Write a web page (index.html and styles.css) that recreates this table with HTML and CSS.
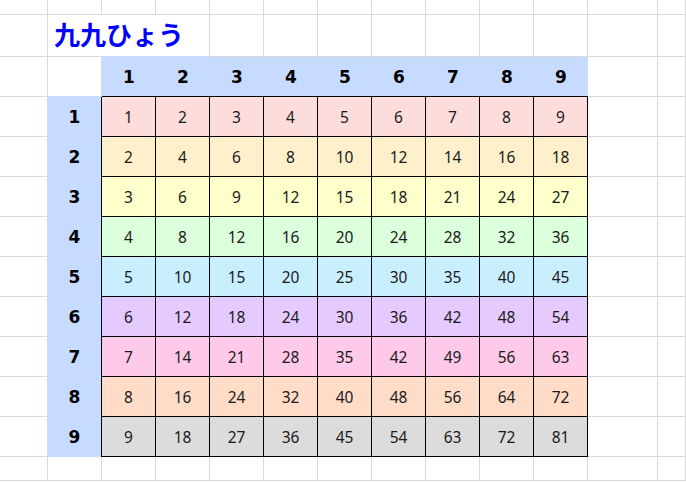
FILE: index.html
```html
<!DOCTYPE html>
<html lang="ja">
<head>
<meta charset="utf-8">
<title>九九ひょう</title>
<link rel="stylesheet" href="styles.css">
</head>
<body>
<div class="sheet">
  <!-- row 1 -->
  <div class="g"></div><div class="g"></div><div class="g"></div><div class="g"></div><div class="g"></div><div class="g"></div><div class="g"></div><div class="g"></div><div class="g"></div><div class="g"></div><div class="g"></div><div class="g"></div><div class="g"></div>
  <!-- row 2: title -->
  <div class="g"></div><div class="g ttl">九九ひょう</div><div class="g"></div><div class="g"></div><div class="g"></div><div class="g"></div><div class="g"></div><div class="g"></div><div class="g"></div><div class="g"></div><div class="g"></div>
  <!-- row 3: column header -->
  <div class="g"></div><div class="g hb"></div>
  <div class="hn">1</div><div class="hn">2</div><div class="hn">3</div><div class="hn">4</div><div class="hn">5</div><div class="hn">6</div><div class="hn">7</div><div class="hn">8</div><div class="hn">9</div>
  <div class="g"></div><div class="g"></div>
  <!-- row 4 -->
  <div class="g ab"></div><div class="rh">1</div>
  <div class="d r1">1</div><div class="d r1">2</div><div class="d r1">3</div><div class="d r1">4</div><div class="d r1">5</div><div class="d r1">6</div><div class="d r1">7</div><div class="d r1">8</div><div class="d r1">9</div>
  <div class="g"></div><div class="g"></div>
  <!-- row 5 -->
  <div class="g ab"></div><div class="rh">2</div>
  <div class="d r2">2</div><div class="d r2">4</div><div class="d r2">6</div><div class="d r2">8</div><div class="d r2">10</div><div class="d r2">12</div><div class="d r2">14</div><div class="d r2">16</div><div class="d r2">18</div>
  <div class="g"></div><div class="g"></div>
  <!-- row 6 -->
  <div class="g ab"></div><div class="rh">3</div>
  <div class="d r3">3</div><div class="d r3">6</div><div class="d r3">9</div><div class="d r3">12</div><div class="d r3">15</div><div class="d r3">18</div><div class="d r3">21</div><div class="d r3">24</div><div class="d r3">27</div>
  <div class="g"></div><div class="g"></div>
  <!-- row 7 -->
  <div class="g ab"></div><div class="rh">4</div>
  <div class="d r4">4</div><div class="d r4">8</div><div class="d r4">12</div><div class="d r4">16</div><div class="d r4">20</div><div class="d r4">24</div><div class="d r4">28</div><div class="d r4">32</div><div class="d r4">36</div>
  <div class="g"></div><div class="g"></div>
  <!-- row 8 -->
  <div class="g ab"></div><div class="rh">5</div>
  <div class="d r5">5</div><div class="d r5">10</div><div class="d r5">15</div><div class="d r5">20</div><div class="d r5">25</div><div class="d r5">30</div><div class="d r5">35</div><div class="d r5">40</div><div class="d r5">45</div>
  <div class="g"></div><div class="g"></div>
  <!-- row 9 -->
  <div class="g ab"></div><div class="rh">6</div>
  <div class="d r6">6</div><div class="d r6">12</div><div class="d r6">18</div><div class="d r6">24</div><div class="d r6">30</div><div class="d r6">36</div><div class="d r6">42</div><div class="d r6">48</div><div class="d r6">54</div>
  <div class="g"></div><div class="g"></div>
  <!-- row 10 -->
  <div class="g ab"></div><div class="rh">7</div>
  <div class="d r7">7</div><div class="d r7">14</div><div class="d r7">21</div><div class="d r7">28</div><div class="d r7">35</div><div class="d r7">42</div><div class="d r7">49</div><div class="d r7">56</div><div class="d r7">63</div>
  <div class="g"></div><div class="g"></div>
  <!-- row 11 -->
  <div class="g ab"></div><div class="rh">8</div>
  <div class="d r8">8</div><div class="d r8">16</div><div class="d r8">24</div><div class="d r8">32</div><div class="d r8">40</div><div class="d r8">48</div><div class="d r8">56</div><div class="d r8">64</div><div class="d r8">72</div>
  <div class="g"></div><div class="g"></div>
  <!-- row 12 -->
  <div class="g ab"></div><div class="rh">9</div>
  <div class="d r9">9</div><div class="d r9">18</div><div class="d r9">27</div><div class="d r9">36</div><div class="d r9">45</div><div class="d r9">54</div><div class="d r9">63</div><div class="d r9">72</div><div class="d r9">81</div>
  <div class="g"></div><div class="g"></div>
  <!-- row 13 -->
  <div class="g"></div><div class="g"></div><div class="g"></div><div class="g"></div><div class="g"></div><div class="g"></div><div class="g"></div><div class="g"></div><div class="g"></div><div class="g"></div><div class="g"></div><div class="g"></div><div class="g"></div>
</div>
</body>
</html>
```
FILE: styles.css
```css
html, body {
  margin: 0;
  padding: 0;
  background: #ffffff;
}

.sheet {
  display: grid;
  grid-template-columns: 48px repeat(10, 54px) 70px 1fr;
  grid-template-rows: 15px 42px repeat(10, 40px) 24px 1fr;
  width: 686px;
  height: 482px;
  overflow: hidden;
  font-family: "DejaVu Sans", "Noto Sans CJK JP", sans-serif;
  color: #111;
}

.sheet > div {
  box-sizing: border-box;
  display: flex;
  align-items: center;
  justify-content: center;
  min-width: 0;
}

.g {
  border-right: 1px solid #dadada;
  border-bottom: 1px solid #dadada;
}

.ttl {
  grid-column: span 3;
  justify-content: flex-start !important;
  align-items: flex-end !important;
  padding: 0 0 10px 6px;
  border-bottom: none;
  background:
    linear-gradient(#dadada, #dadada) left bottom / 54px 1px no-repeat,
    linear-gradient(#c6dbff, #c6dbff) right bottom / 108px 1px no-repeat;
  font-family: "Noto Sans CJK JP", sans-serif;
  font-weight: 700;
  font-size: 26px;
  line-height: 26px;
  color: #0000ff;
  white-space: nowrap;
}

.hb {
  border-right-color: #c6dbff;
  border-bottom-color: #c6dbff;
}

.hn {
  background: #c6dbff;
  border-bottom: 1px solid #000;
  font-weight: 700;
  font-size: 17px;
  color: #000;
}

.ab {
  border-right-color: #c6dbff;
}

.rh {
  background: #c6dbff;
  border-right: 1px solid #000;
  font-weight: 700;
  font-size: 17px;
  color: #000;
}

.d {
  border-right: 1px solid #000;
  border-bottom: 1px solid #000;
  font-family: "Noto Sans", "DejaVu Sans", sans-serif;
  font-size: 15.5px;
  color: #1a1a1a;
}

.r1 { background: #fddcdc; }
.r2 { background: #fff0cc; }
.r3 { background: #ffffcc; }
.r4 { background: #dcffdc; }
.r5 { background: #c9efff; }
.r6 { background: #e5caff; }
.r7 { background: #ffcaea; }
.r8 { background: #ffdcc8; }
.r9 { background: #dcdcdc; }
```
